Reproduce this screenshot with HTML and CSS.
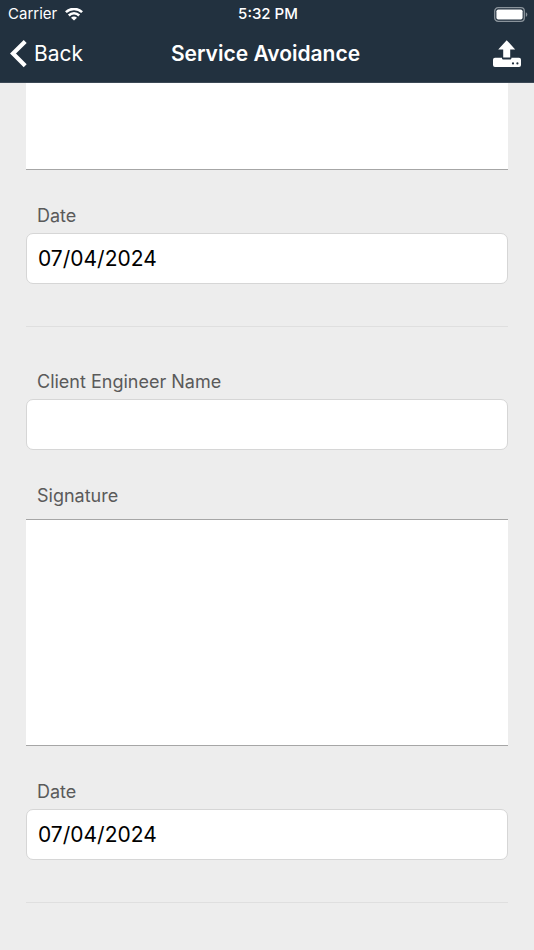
FILE: index.html
```html
<!DOCTYPE html>
<html lang="en">
<head>
<meta charset="utf-8">
<meta name="viewport" content="width=device-width, initial-scale=1">
<title>Service Avoidance</title>
<link rel="stylesheet" href="styles.css">
</head>
<body>
<header class="top">
  <div class="status">
    <div class="carrier">
      <span>Carrier</span>
      <svg width="18" height="13" viewBox="0 0 18 13" fill="none" stroke="#fff" stroke-width="2.5" aria-hidden="true">
        <path d="M.9 4.2C5.4-.2 12.6-.2 17.1 4.2"/>
        <path d="M3.8 7.5c2.9-2.9 7.5-2.9 10.4 0"/>
        <path d="M9 12.6 6 9.7c1.7-1.5 4.3-1.5 6 0z" fill="#fff" stroke="none"/>
      </svg>
    </div>
    <span class="time">5:32 PM</span>
    <svg class="battery" width="34" height="15" viewBox="0 0 34 15" aria-hidden="true">
      <rect x=".7" y=".7" width="29.6" height="13.6" rx="3.4" fill="none" stroke="#8a939b" stroke-width="1.3"/>
      <rect x="2.4" y="2.4" width="26.2" height="10.2" rx="1.8" fill="#fff"/>
      <path d="M31.8 5.2c2 .8 2 3.8 0 4.6z" fill="#8a939b"/>
    </svg>
  </div>
  <nav class="bar">
    <button class="back" type="button">
      <svg width="17" height="28" viewBox="0 0 17 28" fill="none" stroke="#fff" stroke-width="4.2" aria-hidden="true"><path d="M15.2 1.5 3 13.6l12.2 12.2"/></svg>
      <span>Back</span>
    </button>
    <h1 class="title">Service Avoidance</h1>
    <button class="upload" type="button" aria-label="Upload">
      <svg width="28" height="28" viewBox="0 0 28 28" aria-hidden="true">
        <path d="M13.7.2 22.2 9.4h-5v8.2h-7V9.4H5.2z" fill="#fff"/>
        <path d="M2 17.8h7v.8c0 .5.4.8.8.8h7.8c.4 0 .8-.3.8-.8v-.8H26a2 2 0 0 1 2 2v5.2a2 2 0 0 1-2 2H2a2 2 0 0 1-2-2v-5.2a2 2 0 0 1 2-2z" fill="#fff"/>
        <circle cx="20" cy="23.4" r="1.1" fill="#22313f"/>
        <circle cx="24.4" cy="23.4" r="1.1" fill="#22313f"/>
      </svg>
    </button>
  </nav>
</header>
<main>
  <form class="form">
    <canvas class="pad pad-scrolled" aria-label="Signature"></canvas>
    <div class="field">
      <label for="date-1">Date</label>
      <input id="date-1" type="text" value="07/04/2024">
    </div>
    <hr>
    <div class="field">
      <label for="engineer">Client Engineer Name</label>
      <input id="engineer" type="text">
    </div>
    <div class="field">
      <span class="label label-pad" id="signature-label">Signature</span>
      <canvas class="pad" aria-labelledby="signature-label"></canvas>
    </div>
    <div class="field">
      <label for="date-2">Date</label>
      <input id="date-2" type="text" value="07/04/2024">
    </div>
    <hr>
  </form>
</main>
</body>
</html>
```
FILE: styles.css
```css
* {
  box-sizing: border-box;
}

body {
  margin: 0;
  background: #ededed;
  color: #000;
  font-family: Inter, "Liberation Sans", sans-serif;
}

.top {
  background: #22313f;
  border-bottom: 1px solid #3b4855;
  color: #fff;
}

.status,
.bar {
  display: grid;
  grid-template-columns: 1fr auto 1fr;
  align-items: center;
}

.status {
  height: 28px;
  padding: 0 6px 0 8px;
  font-size: 15px;
  line-height: 20px;
}

.carrier {
  display: flex;
  align-items: center;
  gap: 8px;
}

.time {
  font-weight: 500;
}

.battery {
  justify-self: end;
}

.bar {
  height: 54px;
  padding: 0 13px 2px 10px;
}

.back,
.upload {
  display: flex;
  align-items: center;
  padding: 0;
  border: 0;
  background: none;
  color: inherit;
  font: inherit;
}

.back {
  justify-self: start;
  gap: 7px;
  font-size: 21px;
  line-height: 28px;
}

.upload {
  justify-self: end;
}

.title {
  margin: 0;
  font-size: 21px;
  font-weight: 600;
  line-height: 28px;
}

.form {
  display: flex;
  flex-direction: column;
  gap: 33px;
  padding: 0 26px 48px;
}

.field {
  display: flex;
  flex-direction: column;
  gap: 5px;
}

label,
.label {
  padding: 1px 11px 0;
  color: #5a5a5a;
  font-size: 18px;
  line-height: 24px;
}

.label-pad {
  padding-bottom: 6px;
}

input {
  width: 100%;
  height: 51px;
  padding: 0 11px;
  border: 1px solid #d6d6d6;
  border-radius: 7px;
  background: #fff;
  color: #000;
  font: inherit;
  font-size: 21px;
}

.pad {
  display: block;
  width: 100%;
  height: 227px;
  border-top: 1px solid #a6a6a6;
  border-bottom: 1px solid #a6a6a6;
  background: #fff;
}

.pad-scrolled {
  height: 87px;
  border-top: 0;
}

hr {
  width: 100%;
  height: 1px;
  margin: 9px 0;
  border: 0;
  background: #dfdfdf;
}
```
